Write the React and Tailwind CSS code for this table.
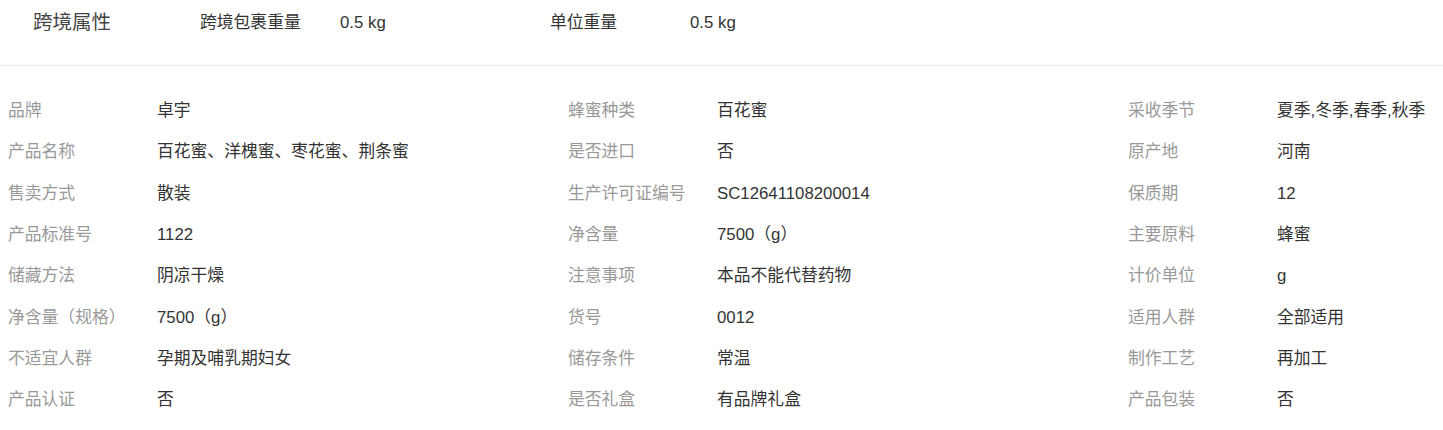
const rows = [
  ["品牌", "卓宇", "蜂蜜种类", "百花蜜", "采收季节", "夏季,冬季,春季,秋季"],
  ["产品名称", "百花蜜、洋槐蜜、枣花蜜、荆条蜜", "是否进口", "否", "原产地", "河南"],
  ["售卖方式", "散装", "生产许可证编号", "SC12641108200014", "保质期", "12"],
  ["产品标准号", "1122", "净含量", "7500（g）", "主要原料", "蜂蜜"],
  ["储藏方法", "阴凉干燥", "注意事项", "本品不能代替药物", "计价单位", "g"],
  ["净含量（规格）", "7500（g）", "货号", "0012", "适用人群", "全部适用"],
  ["不适宜人群", "孕期及哺乳期妇女", "储存条件", "常温", "制作工艺", "再加工"],
  ["产品认证", "否", "是否礼盒", "有品牌礼盒", "产品包装", "否"],
];

const Cell = ({ label, value, last }) => (
  <div className={`flex items-center h-[41.3px] ${last ? "" : "w-[560px]"}`}>
    <span className="w-[149px] shrink-0 text-[#999]">{label}</span>
    <span className="text-[#333] whitespace-nowrap">{value}</span>
  </div>
);

export default function App() {
  return (
    <div
      className="bg-white w-[1443px] h-[430px] text-[16.8px] overflow-hidden"
      style={{ fontFamily: '"Liberation Sans", "Noto Sans CJK SC", sans-serif' }}
    >
      {/* 跨境属性 */}
      <div className="h-[66px] border-b border-[#e8e8e8]">
        <div className="flex items-center h-[45px] text-[#333]">
          <span className="pl-[33px] w-[200px] text-[19.5px] text-[#444]">跨境属性</span>
          <span className="w-[140px]">跨境包裹重量</span>
          <span className="w-[210px]">0.5 kg</span>
          <span className="w-[140px]">单位重量</span>
          <span>0.5 kg</span>
        </div>
      </div>

      {/* 商品属性 */}
      <div className="pt-[24px] pl-[8px]">
        {rows.map((r, i) => (
          <div key={i} className="flex">
            <Cell label={r[0]} value={r[1]} />
            <Cell label={r[2]} value={r[3]} />
            <Cell label={r[4]} value={r[5]} last />
          </div>
        ))}
      </div>
    </div>
  );
}
